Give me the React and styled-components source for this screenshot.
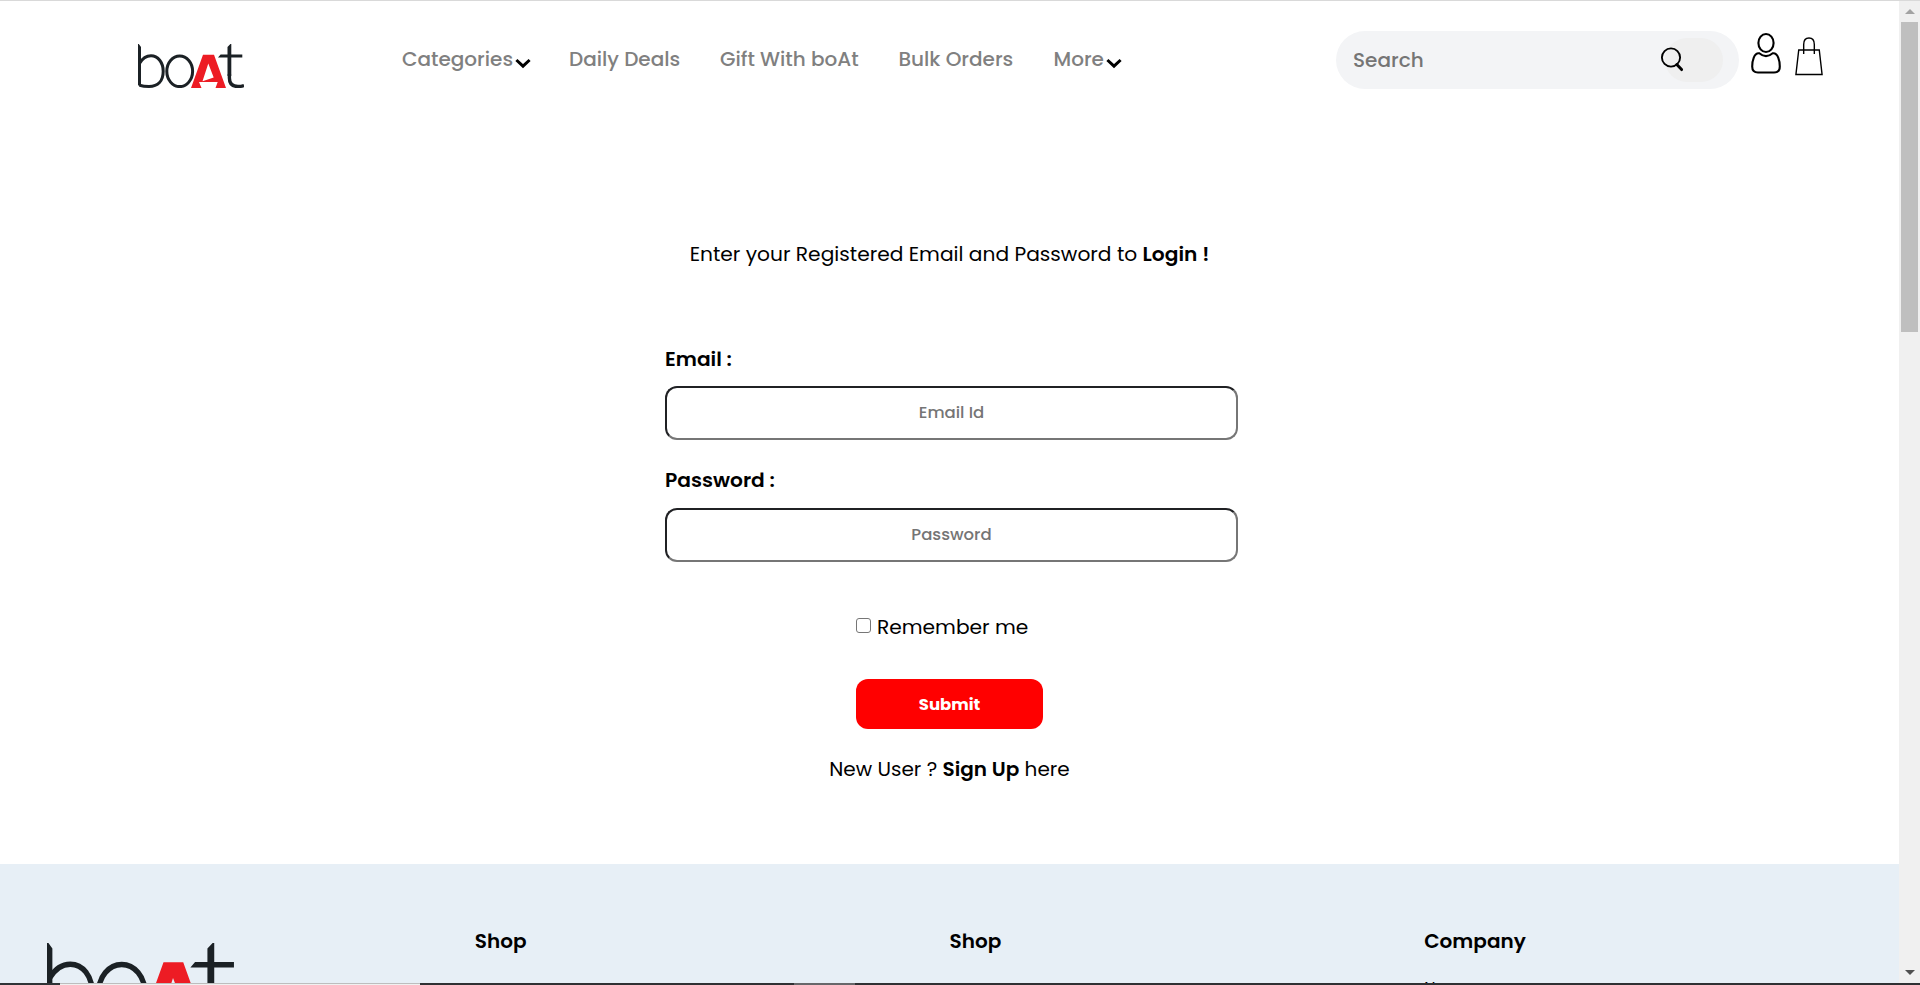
import React from "react";
import styled, { createGlobalStyle } from "styled-components";

const GlobalStyle = createGlobalStyle`
  *, *::before, *::after { box-sizing: border-box; }
  body { margin: 0; background: #fff; color: #000; overflow: hidden; }
  body, input, button { font-family: Poppins, Inter, "Liberation Sans", sans-serif; }
`;

const Page = styled.div`
  display: flex;
  flex-direction: column;
  height: 985px;
  overflow: hidden;
  border-top: 1px solid #d9d9d9;
`;

const Viewport = styled.div`
  display: flex;
  height: 982px;
`;

const Content = styled.div`
  width: 1899px;
  height: 982px;
  overflow: hidden;
`;

const Header = styled.header`
  display: flex;
  align-items: flex-start;
  height: 117px;
  padding-left: 138px;
`;

const HeaderLogo = styled.div`
  width: 264px;
  padding-top: 43px;
`;

const Nav = styled.nav`
  display: flex;
  width: 934px;
  padding-top: 43px;
`;

const NavItem = styled.a`
  display: flex;
  width: ${(p) => p.$width}px;
  font-size: 20px;
  font-weight: 500;
  line-height: 30px;
  color: #808080;
  white-space: nowrap;
  svg { margin: 13.5px 0 0 2px; flex: none; }
`;

const SearchBox = styled.div`
  display: flex;
  align-items: center;
  width: 403px;
  height: 58px;
  margin-top: 30px;
  padding: 0 16px 0 17px;
  border-radius: 29px;
  background: #f3f4f6;
`;

const SearchInput = styled.input`
  flex: 1;
  min-width: 0;
  padding: 0;
  border: 0;
  outline: 0;
  background: transparent;
  font-size: 20px;
  font-weight: 500;
  &::placeholder { color: #757575; opacity: 1; }
`;

const SearchButton = styled.button`
  display: flex;
  align-items: center;
  width: 58px;
  height: 44px;
  padding: 0;
  border: 0;
  border-radius: 22px;
  background: #efefef;
  svg { margin-left: -5px; margin-top: -3px; flex: none; }
`;

const HeaderIcons = styled.div`
  display: flex;
  gap: 14px;
  padding: 31px 0 0 12px;
`;

const Main = styled.main`
  display: flex;
  flex-direction: column;
  align-items: center;
  height: 746px;
  padding-top: 121px;
  font-size: 20.2px;
  line-height: 30px;
`;

const Text = styled.p`
  margin: 0;
  font-size: ${(p) => p.$size}px;
  white-space: nowrap;
  b { font-weight: 600; }
`;

const Form = styled.form`
  display: flex;
  flex-direction: column;
  width: 573px;
  margin: 75px 0 0 4px;
`;

const FieldLabel = styled.label`
  font-weight: 600;
`;

const Field = styled.input`
  height: 54px;
  margin: ${(p) => p.$before}px 0 ${(p) => p.$after}px;
  padding: 0 2px 1px;
  border: 2px solid;
  border-color: #202124 #767676 #767676 #202124;
  border-radius: 12px;
  outline: 0;
  text-align: center;
  font-size: 16.5px;
  font-weight: 500;
  &::placeholder { color: #757575; opacity: 1; }
`;

const Remember = styled.label`
  display: flex;
  align-items: center;
  gap: 6px;
  margin-left: 191px;
`;

const Checkbox = styled.input`
  appearance: none;
  width: 15px;
  height: 15px;
  margin: 0 0 3px;
  border: 1px solid #767676;
  border-radius: 3px;
  background: #fff;
`;

const Submit = styled.button`
  width: 187px;
  height: 50px;
  margin: 37px 0 25px 191px;
  border: 0;
  border-radius: 12px;
  background: #f00;
  color: #fff;
  font-size: 16.5px;
  font-weight: 700;
`;

const Footer = styled.footer`
  display: grid;
  grid-template-columns: repeat(4, 1fr);
  height: 400px;
  background: #e7eff6;
`;

const FooterColumn = styled.div`
  padding-top: 62px;
  line-height: 30px;
`;

const FooterBrand = styled.div`
  padding: 79px 0 0 47px;
`;

const FooterTitle = styled.h4`
  margin: 0 0 20px;
  font-size: 20px;
  font-weight: 600;
`;

const FooterLink = styled.a`
  display: block;
  font-size: 16px;
  line-height: 24px;
`;

const Scrollbar = styled.div`
  display: flex;
  flex-direction: column;
  align-items: center;
  justify-content: space-between;
  width: 21px;
  height: 982px;
  background: #f0f0f0;
`;

const Arrow = styled.div`
  height: 21px;
  display: flex;
  align-items: center;
`;

const Thumb = styled.div`
  width: 17px;
  height: 310px;
  margin-bottom: auto;
  background: #bfbfbf;
`;

const Strip = styled.div`
  display: flex;
  height: 2px;
`;

const StripPart = styled.div`
  width: ${(p) => p.$width}px;
  border-top: 1px solid ${(p) => p.$edge || p.$color};
  background: ${(p) => p.$color};
`;

const Logo = ({ width, height }) => (
  <svg width={width} height={height} viewBox="0 0 106 44" preserveAspectRatio="none" fill="none">
    <g stroke="#1b2125" strokeWidth="3">
      <path d="M1.5 19.5C5 13.5 9 11.8 13 11.8C20 11.8 25.2 18.5 25.2 27.3C25.2 37 20 42.5 11 42.5C7 42.5 4 42 1.5 41.2" />
      <ellipse cx="41.7" cy="27.3" rx="12.9" ry="15.3" />
      <path d="M91.4 30V34Q91.4 42.5 100 42.5Q103 42.5 106 41.5" strokeWidth="3.4" />
    </g>
    <path d="M0 0H.8L3 3V42.5L0 41.3ZM89.5 3L92.4 0H93.3V32H89.5ZM80 13.6L82.6 10.6H104.3V13.6Z" fill="#1b2125" />
    <path fill="#ed1c24" fillRule="evenodd" d="M65 10.7H76L88 44H77.5L79.7 38H61L63.5 44H53ZM70.3 19.5L64.5 37.3L75.7 33.4Z" />
  </svg>
);

const Chevron = () => (
  <svg width="16" height="11" viewBox="0 0 16 11" fill="none" stroke="#000" strokeWidth="3">
    <path d="M1.4 2L8 8.2L14.6 2" />
  </svg>
);

const SearchIcon = () => (
  <svg width="24" height="26" viewBox="0 0 24 26" fill="none" stroke="#000">
    <circle cx="11" cy="11.5" r="9.1" strokeWidth="1.9" />
    <path d="M16.8 18.5L21.6 23.6" strokeWidth="2.9" strokeLinecap="round" />
  </svg>
);

const UserIcon = () => (
  <svg width="30" height="42" viewBox="0 0 30 42" fill="none" stroke="#000" strokeWidth="2.1">
    <ellipse cx="15" cy="11" rx="7.6" ry="9" />
    <path d="M8.3 21.3Q15 27 21.7 21.3C27 20.5 28.8 29 28.8 34.5Q28.8 40.5 23 40.5H7Q1.2 40.5 1.2 34.5C1.2 29 3 20.5 8.3 21.3Z" />
  </svg>
);

const BagIcon = () => (
  <svg width="28" height="44" viewBox="0 0 30 44" preserveAspectRatio="none" fill="none" stroke="#000" strokeWidth="1.5">
    <path d="M4 18H26L29 42.5H1Z" />
    <path d="M9.3 22V12.5Q9.3 6 15 6Q20.7 6 20.7 12.5V22" />
  </svg>
);

const Triangle = ({ down }) => (
  <svg width="10" height="5" viewBox="0 0 10 5">
    <path d={down ? "M0 0H10L5 5Z" : "M0 5H10L5 0Z"} fill={down ? "#505050" : "#a3a3a3"} />
  </svg>
);

export default function App() {
  return (
    <Page>
      <GlobalStyle />
      <Viewport>
        <Content>
          <Header>
            <HeaderLogo><Logo width={106} height={44} /></HeaderLogo>
            <Nav>
              <NavItem $width={167}>Categories<Chevron /></NavItem>
              <NavItem $width={151}>Daily Deals</NavItem>
              <NavItem $width={178.5}>Gift With boAt</NavItem>
              <NavItem $width={155}>Bulk Orders</NavItem>
              <NavItem $width={100}>More<Chevron /></NavItem>
            </Nav>
            <SearchBox>
              <SearchInput placeholder="Search" />
              <SearchButton type="button"><SearchIcon /></SearchButton>
            </SearchBox>
            <HeaderIcons><UserIcon /><BagIcon /></HeaderIcons>
          </Header>
          <Main>
            <Text $size={20.2}>Enter your Registered Email and Password to <b>Login !</b></Text>
            <Form>
              <FieldLabel>Email :</FieldLabel>
              <Field placeholder="Email Id" $before={12} $after={25} />
              <FieldLabel>Password :</FieldLabel>
              <Field placeholder="Password" type="password" $before={13} $after={50} />
              <Remember><Checkbox type="checkbox" />Remember me</Remember>
              <Submit type="button">Submit</Submit>
            </Form>
            <Text $size={20}>New User ? <b>Sign Up</b> here</Text>
          </Main>
          <Footer>
            <FooterBrand><Logo width={190} height={79} /></FooterBrand>
            <FooterColumn><FooterTitle>Shop</FooterTitle></FooterColumn>
            <FooterColumn><FooterTitle>Shop</FooterTitle></FooterColumn>
            <FooterColumn>
              <FooterTitle>Company</FooterTitle>
              <FooterLink>News</FooterLink>
            </FooterColumn>
          </Footer>
        </Content>
        <Scrollbar>
          <Arrow><Triangle /></Arrow>
          <Thumb />
          <Arrow><Triangle down /></Arrow>
        </Scrollbar>
      </Viewport>
      <Strip>
        <StripPart $width={60} $color="#2f3336" />
        <StripPart $width={360} $color="#f0f0f0" $edge="#bdbdbd" />
        <StripPart $width={374} $color="#2f3033" />
        <StripPart $width={61} $color="#67676a" />
        <StripPart $width={1065} $color="#2f3033" />
      </Strip>
    </Page>
  );
}
